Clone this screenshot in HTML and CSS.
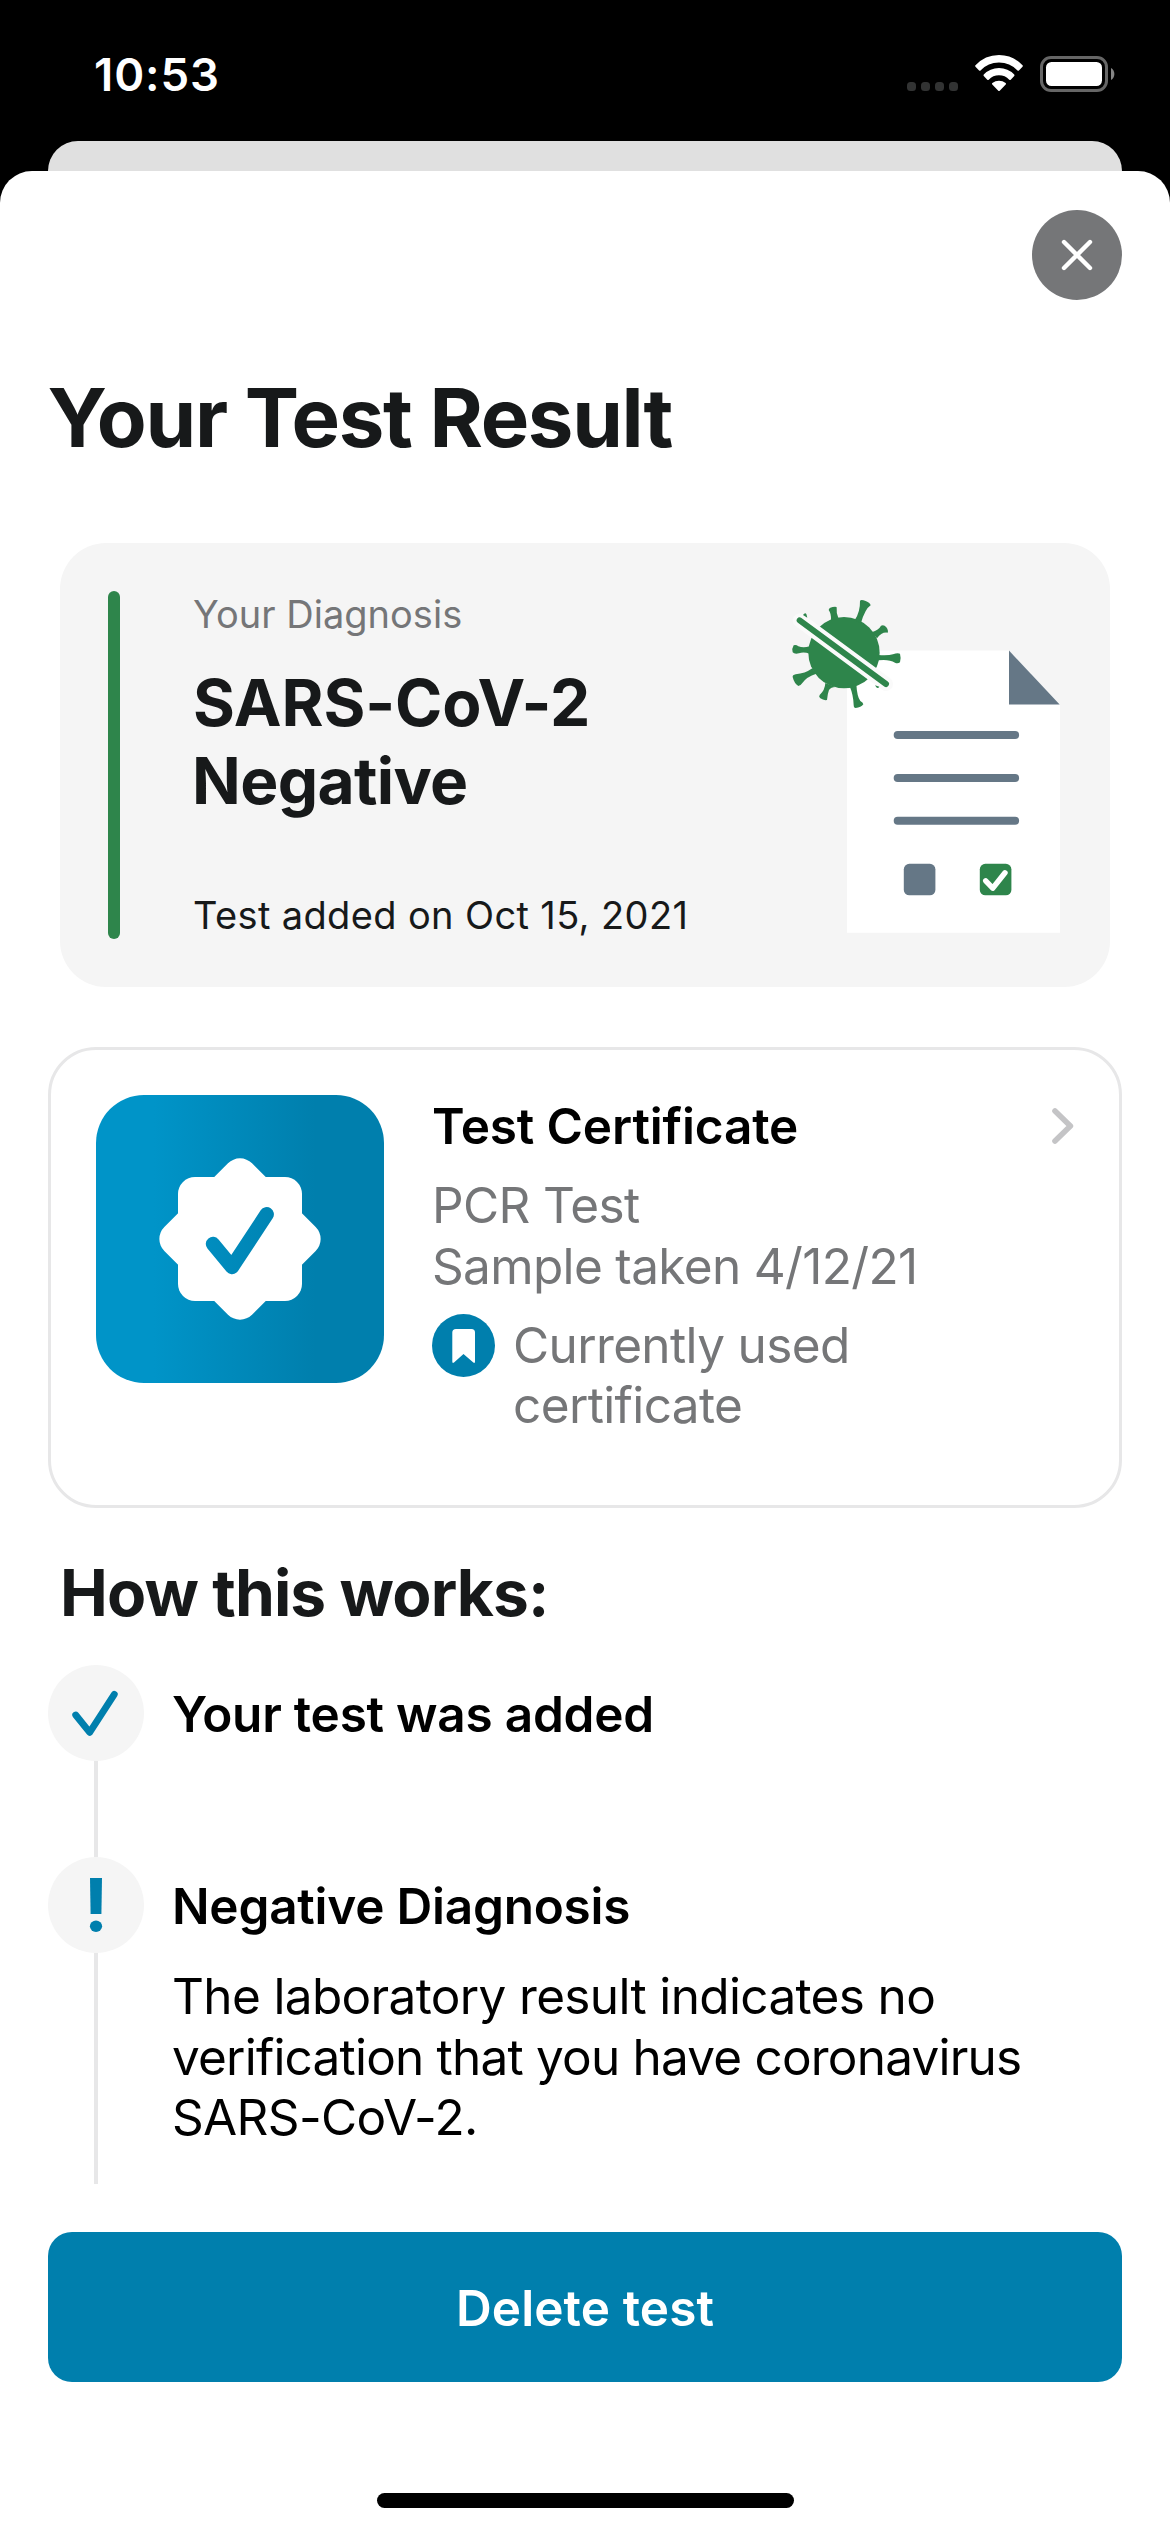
FILE: index.html
```html
<!DOCTYPE html>
<html lang="en">
<head>
<meta charset="utf-8">
<title>Your Test Result</title>
<link rel="stylesheet" href="styles.css">
</head>
<body>
<div class="screen">
  <header class="status">
    <time class="clock">10:53</time>
    <svg class="status-icons" viewBox="905 50 212 48" aria-hidden="true">
      <g fill="#323333">
        <rect x="907" y="82" width="9" height="9" rx="3.5"/>
        <rect x="921" y="82" width="9" height="9" rx="3.5"/>
        <rect x="935" y="82" width="9" height="9" rx="3.5"/>
        <rect x="949" y="82" width="9" height="9" rx="3.5"/>
      </g>
      <g fill="#fff" stroke="#fff" stroke-width="2" stroke-linejoin="round">
        <path d="M976.2 66A31 31 0 0 1 1021.8 66L1018.2 69.8A26.5 26.5 0 0 0 979.8 69.8Z"/>
        <path d="M984.5 75.2A20 20 0 0 1 1013.5 75.2L1010 79A15 15 0 0 0 988 79Z"/>
        <path d="M993 83.8A9.5 9.5 0 0 1 1005 83.8L999 90Z"/>
      </g>
      <rect x="1041.5" y="57.5" width="65" height="33" rx="9.5" fill="none" stroke="#666" stroke-width="3"/>
      <rect x="1046" y="62" width="56" height="24" rx="5.5" fill="#fff"/>
      <path d="M1111 68A7 7 0 0 1 1111 80Z" fill="#858585"/>
    </svg>
  </header>
  <div class="back-sheet"></div>
  <main class="sheet">
    <button class="close" aria-label="Close">
      <svg viewBox="0 0 90 90"><path d="M32 32L58 58M58 32L32 58" fill="none" stroke="#fff" stroke-width="4.4" stroke-linecap="round"/></svg>
    </button>
    <h1 class="title">Your Test Result</h1>

    <section class="result">
      <div class="result-bar"></div>
      <div class="result-text">
        <p class="result-label">Your Diagnosis</p>
        <h2 class="result-name"><span class="line">SARS-CoV-2</span><span class="line negative">Negative</span></h2>
        <p class="result-date">Test added on Oct 15, 2021</p>
      </div>
      <svg class="result-art" viewBox="785 591 275 348" aria-hidden="true">
        <path d="M847 650.6H1009L1060 704.5V932.7H847Z" fill="#fff"/>
        <path d="M1009 650.6L1059.7 704.6H1009Z" fill="#657786"/>
        <g fill="#657786">
          <rect x="893.7" y="731" width="125.4" height="8" rx="4"/>
          <rect x="893.7" y="774" width="125.4" height="8" rx="4"/>
          <rect x="893.7" y="816.7" width="125.4" height="8" rx="4"/>
          <rect x="903.8" y="863.8" width="31.6" height="31.5" rx="5.5"/>
        </g>
        <rect x="979.8" y="863.8" width="31.6" height="31.5" rx="5.5" fill="#2e854b"/>
        <path d="M985.7 880.8L992.7 888.2L1005 872.8" fill="none" stroke="#fff" stroke-width="5.4" stroke-linecap="round" stroke-linejoin="round"/>
        <g transform="translate(785 595) scale(.33333)" fill="#2e854b">
          <circle cx="177" cy="173" r="107"/>
          <path d="M209 76Q226 50 225 18Q227 12 242 18Q256 24 257 31Q240 42 228 84Z"/>
          <path d="M161 72Q153 55 155 37Q154 34 143 36Q132 38 131 45Q139 55 138 76Z"/>
          <path d="M260 112Q282 104 288 92Q297 88 304 97Q311 107 308 113Q290 110 276 130Z"/>
          <path d="M280 180Q310 182 324 178Q338 172 345 176Q349 190 345 202Q338 207 330 203Q312 192 280 196Z"/>
          <path d="M74 176Q55 170 42 175Q28 178 23 172Q20 160 26 151Q33 148 40 154Q55 160 74 154Z"/>
          <path d="M82 220Q60 236 32 238Q22 240 23 246Q28 266 40 273Q46 273 52 264Q65 245 94 236Z"/>
          <path d="M121 264Q120 285 104 300Q100 306 106 310Q116 317 126 315Q128 295 132 285Q138 276 152 276Z"/>
          <path d="M194 274Q205 300 206 330Q206 339 212 339Q228 338 235 328Q234 322 226 318Q216 305 214 266Z"/>
          <path d="M44 76L303 267" stroke="#fafafa" stroke-width="42" stroke-linecap="round"/>
          <path d="M44 76L303 267" stroke="#2e854b" stroke-width="18" stroke-linecap="round"/>
          <path d="M54 60Q60 52 64 57L67 68Z"/>
          <path d="M270 271L283 275Q279 282 274 277Z"/>
        </g>
      </svg>
    </section>

    <section class="certificate">
      <div class="tile">
        <svg viewBox="0 0 288 288" aria-hidden="true">
          <defs><linearGradient id="blue" gradientUnits="userSpaceOnUse" x1="58" x2="218" y1="0" y2="0"><stop offset="0" stop-color="#0094c8"/><stop offset="1" stop-color="#007fad"/></linearGradient></defs>
          <rect x="82" y="82" width="124" height="124" rx="17" fill="#fff"/>
          <rect x="82" y="82" width="124" height="124" rx="17" fill="#fff" transform="rotate(45 144 144)"/>
          <path d="M117 149L136 172L170.700 119.300" fill="none" stroke="url(#blue)" stroke-width="14.400" stroke-linecap="round" stroke-linejoin="round"/>
        </svg>
      </div>
      <div class="cert-text">
        <div class="cert-head">
          <h2 class="cert-title">Test Certificate</h2>
          <svg class="chevron" viewBox="0 0 22 36" aria-hidden="true"><path d="M3 3L18.400 18L3 33" fill="none" stroke="#c4c4c6" stroke-width="5.600" stroke-linecap="round" stroke-linejoin="round"/></svg>
        </div>
        <p class="cert-info">PCR Test<br>Sample taken 4/12/21</p>
        <div class="cert-used">
          <svg class="badge" viewBox="0 0 63 63" aria-hidden="true"><circle cx="31.500" cy="31.500" r="31.500" fill="#007fad"/><path d="M24 15H39.500Q43 15 43 18.500V47.500Q43 49.800 41.300 48.500L31.500 40L22 48.500Q20.300 49.800 20.300 47.500V18.500Q20.300 15 24 15Z" fill="#fff"/></svg>
          <p class="cert-state">Currently used<br>certificate</p>
        </div>
      </div>
    </section>

    <h2 class="how">How this works:</h2>
    <ol class="steps">
      <li class="step first">
        <div class="rail">
          <svg class="dot" viewBox="0 0 96 96" aria-hidden="true"><circle cx="48" cy="48" r="48" fill="#f5f5f5"/><path d="M27.700 50L41.700 67.300L66.300 29.300" fill="none" stroke="#007fad" stroke-width="6.800" stroke-linecap="round" stroke-linejoin="round"/></svg>
          <div class="wire"></div>
        </div>
        <div class="step-text"><h3 class="step-title">Your test was added</h3></div>
      </li>
      <li class="step second">
        <div class="rail">
          <svg class="dot" viewBox="0 0 96 96" aria-hidden="true"><circle cx="48" cy="48" r="48" fill="#f5f5f5"/><path d="M42 21H54L53.400 57H42.600Z" fill="#007fad"/><ellipse cx="48" cy="69.300" rx="6.100" ry="5.700" fill="#007fad"/></svg>
          <div class="wire"></div>
        </div>
        <div class="step-text">
          <h3 class="step-title">Negative Diagnosis</h3>
          <p class="step-body"><span class="loose">The laboratory result indicates no</span><br>verification that you have coronavirus<br><span class="loose">SARS-CoV-2.</span></p>
        </div>
      </li>
    </ol>

    <button class="delete">Delete test</button>
    <div class="home"></div>
  </main>
</div>
</body>
</html>
```

FILE: styles.css
```css
* { box-sizing: border-box; margin: 0; padding: 0; }
body { background: #000; font-family: Inter, "Liberation Sans", sans-serif; font-weight: 400; }
svg { display: block; flex: none; }
button { border: 0; font: inherit; }

.screen { width: 1170px; height: 2532px; display: flex; flex-direction: column; background: #000; overflow: hidden; }
.status { height: 141px; flex: none; display: flex; justify-content: space-between; padding: 47px 53px 0 94px; color: #fff; }
.clock { font-size: 45.5px; font-weight: 600; line-height: 55px; letter-spacing: .91px; }
.status-icons { width: 212px; height: 48px; margin-top: 3px; }
.back-sheet { height: 60px; margin: 0 48px -30px; flex: none; border-radius: 30px 30px 0 0; background: #e0e0e0; }
.sheet { position: relative; flex: 1; display: flex; flex-direction: column; padding-top: 39px; border-radius: 32px 32px 0 0; background: #fff; color: #17191a; }

.close { align-self: flex-end; flex: none; width: 90px; height: 90px; margin-right: 48px; border-radius: 50%; background: #757678; }
.title { margin: 68px 0 0 47.5px; font-size: 81.5px; font-weight: 700; line-height: 99px; letter-spacing: -1.33px; }

.result { display: flex; margin: 76px 60px 0; height: 444px; padding: 48px 50px 48px 48px; border-radius: 46px; background: #f5f5f5; }
.result-bar { width: 12px; height: 348px; border-radius: 6px; background: #2e854b; }
.result-text { margin-left: 73px; white-space: nowrap; }
.result-label { font-size: 38px; line-height: 46px; color: #757678; letter-spacing: .02px; }
.result-name { margin-top: 27px; font-size: 64px; font-weight: 700; line-height: 78px; letter-spacing: -.11px; }
.line { display: block; }
.negative { margin-left: -1px; letter-spacing: -.64px; }
.result-date { margin-top: 72px; font-size: 38px; line-height: 46px; letter-spacing: .37px; }
.result-art { width: 275px; height: 348px; margin-left: auto; }

.certificate { display: flex; gap: 48px; height: 461px; margin: 60px 48px 0; padding: 45px; border: 3px solid #e7e7e8; border-radius: 48px; }
.tile { flex: none; width: 288px; height: 288px; border-radius: 48px; background: linear-gradient(90deg, #0094c8 20%, #007fad 76%); }
.cert-text { flex: 1; padding-top: 1px; white-space: nowrap; font-size: 49.5px; line-height: 61px; color: #757678; }
.cert-head { display: flex; justify-content: space-between; }
.cert-title { font-size: 49.5px; font-weight: 600; line-height: 60px; letter-spacing: -.14px; color: #000; }
.chevron { width: 22px; height: 36px; margin-top: 12px; }
.cert-info { margin-top: 19px; letter-spacing: -.66px; }
.cert-used { display: flex; gap: 18px; margin-top: 17px; }
.badge { width: 63px; height: 63px; }
.cert-state { margin-top: 1px; line-height: 60px; letter-spacing: -.63px; }

.how { margin: 46px 0 0 60px; font-size: 64px; font-weight: 700; line-height: 77px; letter-spacing: -.88px; }
.steps { list-style: none; margin: 34px 48px 0; color: #000; }
.step { display: flex; gap: 28px; }
.first { height: 192px; }
.second { height: 327px; }
.rail { width: 96px; display: flex; flex-direction: column; align-items: center; }
.dot { width: 96px; height: 96px; }
.wire { flex: 1; width: 4px; background: #e7e7e8; }
.step-text { padding-top: 19px; white-space: nowrap; }
.step-title { font-size: 49.5px; font-weight: 600; line-height: 60px; letter-spacing: -.23px; }
.step-body { margin: 30px 0 0; font-size: 49.5px; line-height: 60.6px; letter-spacing: -.8px; }
.loose { letter-spacing: -.65px; }

.delete { flex: none; height: 150px; margin: 48px 48px 0; padding-top: 2px; border-radius: 24px; background: #007fad; color: #fff; font-size: 49.5px; font-weight: 600; line-height: 60px; letter-spacing: .11px; }
.home { align-self: center; flex: none; width: 417px; height: 15px; margin-top: 111px; border-radius: 7.5px; background: #000; }
```
